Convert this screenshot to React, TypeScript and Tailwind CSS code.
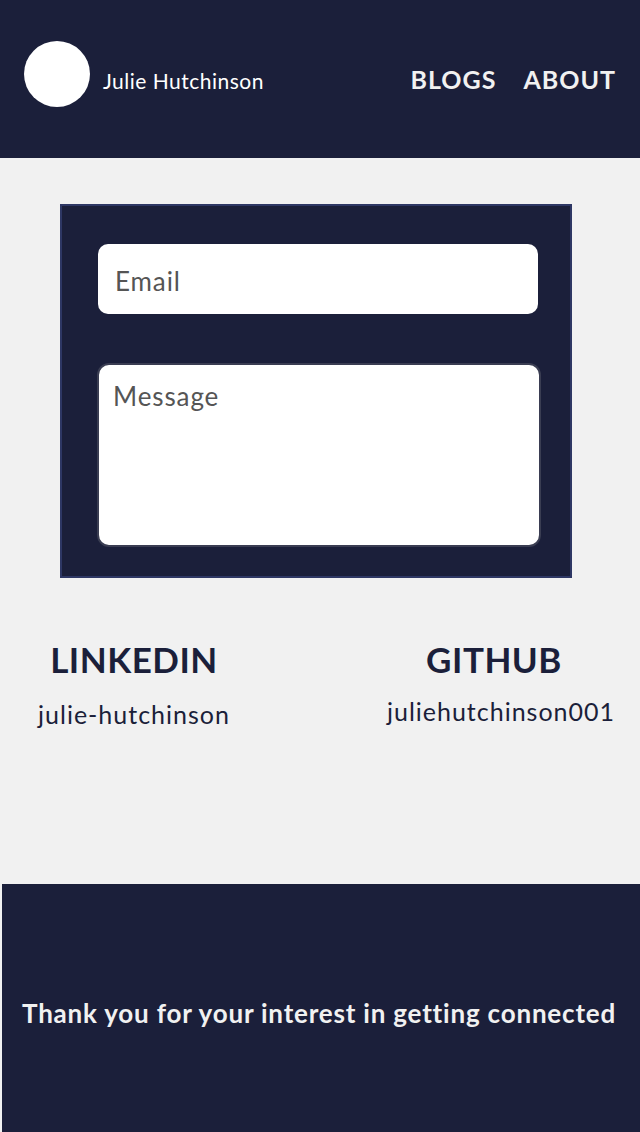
import React from 'react';

const font = { fontFamily: '"Lato", "Open Sans", sans-serif' };

export default function App() {
  return (
    <div className="min-h-[1132px] bg-[#f1f1f1] flex flex-col" style={font}>
      {/* Header */}
      <header className="h-[158px] bg-[#1b1f3a] flex items-center justify-between pl-6 pr-6">
        <div className="flex items-center gap-[13px]">
          <div className="w-[66px] h-[66px] rounded-full bg-white mb-[10px]" />
          <span className="text-white text-[21px] tracking-[0.5px] mt-[4px]">Julie Hutchinson</span>
        </div>
        <nav className="flex items-center gap-[27px] text-[25px] font-bold text-[#f1f1f1] tracking-[1px] mt-[2px]">
          <a>BLOGS</a>
          <a>ABOUT</a>
        </nav>
      </header>

      {/* Contact form */}
      <div className="ml-[60px] mt-[46px] w-[512px] h-[374px] bg-[#1b1f3a] border-2 border-[#2e3764] pt-[38px] pl-[36px]">
        <input
          type="text"
          placeholder="Email"
          className="w-[440px] h-[70px] rounded-[10px] bg-white px-[17px] pt-[3px] text-[26px] tracking-[0.9px] text-[#555] placeholder:text-[#555] outline-none"
        />
        <textarea
          placeholder="Message"
          className="block mt-[49px] -ml-[1px] w-[444px] h-[184px] rounded-[12px] bg-white border-2 border-[#3a3d52] px-[14px] py-[12px] text-[26px] tracking-[0.9px] text-[#555] placeholder:text-[#555] outline-none resize-none"
        />
      </div>

      {/* Links */}
      <div className="flex mt-[56px] text-[#1b1f3a]">
        <div className="w-[268px] flex flex-col items-center">
          <h2 className="text-[35px] font-bold leading-[50px] tracking-[0.5px]">LINKEDIN</h2>
          <p className="text-[25px] tracking-[1px] mt-[12px]">julie-hutchinson</p>
        </div>
        <div className="flex-1 flex flex-col items-center pl-[90px]">
          <h2 className="text-[35px] font-bold leading-[50px] tracking-[0.5px] -ml-[10px]">GITHUB</h2>
          <p className="text-[25px] tracking-[1px] mt-[9px] ml-[4px]">juliehutchinson001</p>
        </div>
      </div>

      {/* Footer */}
      <footer className="mt-auto ml-[2px] h-[248px] bg-[#1b1f3a] flex items-center justify-center pt-[10px] pr-[4px]">
        <p className="text-[#f1f1f1] text-[26px] font-bold tracking-[0.8px]">Thank you for your interest in getting connected</p>
      </footer>
    </div>
  );
}
